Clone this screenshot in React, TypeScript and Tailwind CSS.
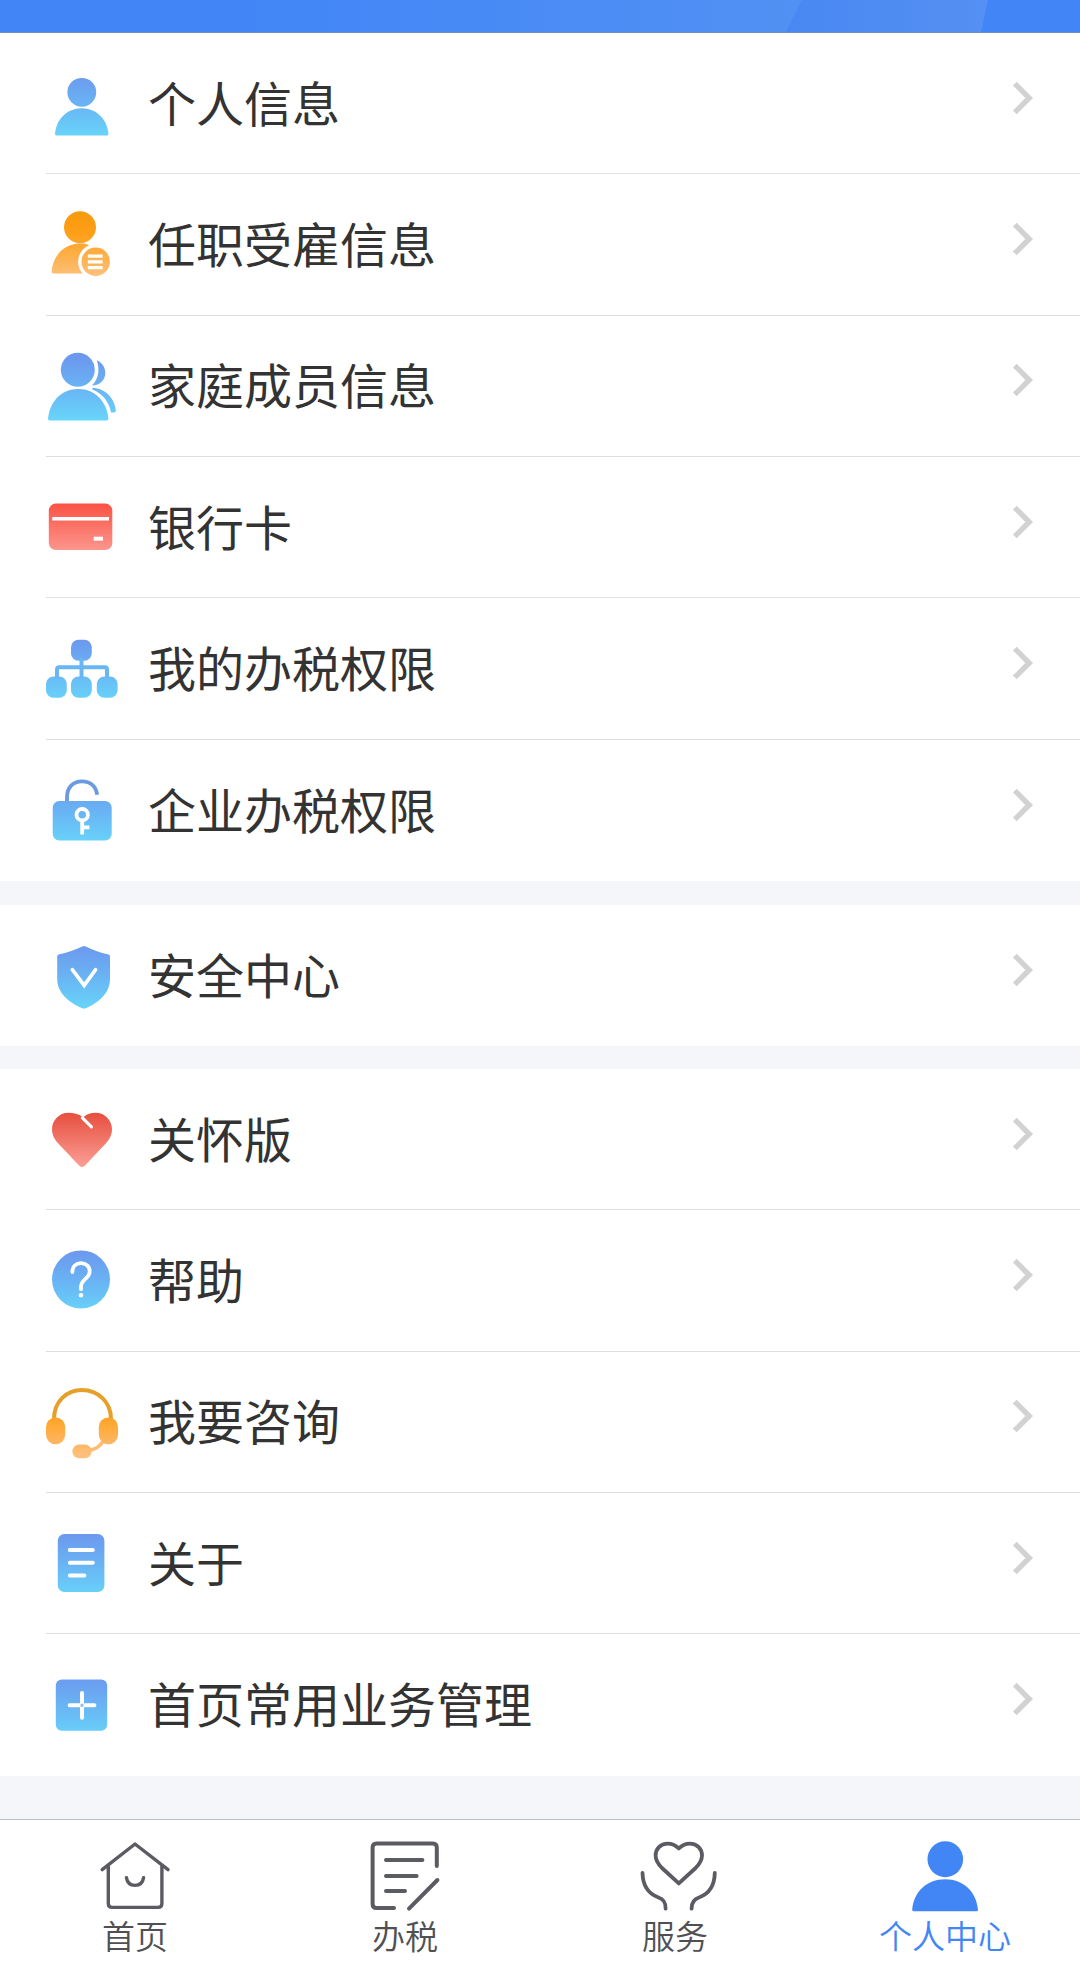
import type { ReactNode } from "react";

const BLUE = "url(#blue)";
const ORANGE = "url(#orange)";
const RED = "url(#red)";

function Gradients() {
  return (
    <svg className="absolute size-0" aria-hidden="true">
      <defs>
        <linearGradient id="blue" gradientUnits="userSpaceOnUse" x1="0" y1="41" x2="0" y2="103">
          <stop offset="0" stopColor="#6c98ee" />
          <stop offset="0.5" stopColor="#69b4f4" />
          <stop offset="1" stopColor="#68d4fa" />
        </linearGradient>
        <linearGradient id="orange" gradientUnits="userSpaceOnUse" x1="0" y1="37" x2="0" y2="103">
          <stop offset="0" stopColor="#f79a0c" />
          <stop offset="0.35" stopColor="#fe9f18" />
          <stop offset="1" stopColor="#fdc07c" />
        </linearGradient>
        <linearGradient id="red" gradientUnits="userSpaceOnUse" x1="0" y1="46" x2="0" y2="96">
          <stop offset="0" stopColor="#fb5143" />
          <stop offset="1" stopColor="#fc9a91" />
        </linearGradient>
        <linearGradient id="heart" gradientUnits="userSpaceOnUse" x1="0" y1="46" x2="0" y2="98">
          <stop offset="0" stopColor="#e75142" />
          <stop offset="1" stopColor="#fb9f96" />
        </linearGradient>
      </defs>
    </svg>
  );
}

const icons: Record<string, ReactNode> = {
  person: (
    <g fill={BLUE}>
      <circle cx="81.8" cy="59.3" r="14.4" />
      <path d="M56.6 102.6Q55 102.6 55 101C56 86.5 67 75.3 81.7 75.3S107.4 86.5 108.4 101Q108.4 102.6 106.8 102.6Z" />
    </g>
  ),
  job: (
    <>
      <g fill={ORANGE}>
        <circle cx="80" cy="53.3" r="16" />
        <path d="M53.2 99.4Q51.6 99.4 51.7 97.8C52.5 82 64 69.6 80 69.6C83 69.6 86 70 88.5 71L96 99.4Z" />
      </g>
      <circle cx="95.7" cy="87.7" r="17.6" fill="#fff" />
      <circle cx="95.7" cy="87.7" r="14.2" fill={ORANGE} />
      <path d="M87.8 82.2H102.6M87.8 87.9H102.6M87.8 93.7H102.6" stroke="#fff" strokeWidth="3.2" />
    </>
  ),
  family: (
    <g fill={BLUE}>
      <circle cx="77.8" cy="53.7" r="17" />
      <path d="M49.6 104.4Q48 104.4 48 102.8C49.5 86 61 73 78.2 73S107 86 108.4 102.8Q108.4 104.4 106.8 104.4Z" />
      <path d="M96.8 44.2C102.5 46.5 105.3 51.8 105.3 57C105.3 64 99.8 69.6 92 69.4C99 62.5 99.8 53 96.8 44.2Z" />
      <path d="M92.4 71.8C106 72.5 114.8 83 115.9 94.6Q116 96.4 114.2 96.4H111C109.3 86.5 103 77.6 92.4 73.4Z" />
    </g>
  ),
  card: (
    <>
      <rect x="48.8" y="46.6" width="63.5" height="46.5" rx="7" fill={RED} />
      <path d="M52.3 61.7H109" stroke="#fff" strokeWidth="3.6" />
      <path d="M93.7 81.7H103" stroke="#fff" strokeWidth="4" />
    </>
  ),
  tree: (
    <>
      <g fill={BLUE}>
        <rect x="71" y="41.7" width="20.8" height="21" rx="7.5" />
        <rect x="46" y="78.6" width="20.8" height="21.2" rx="7.5" />
        <rect x="71" y="78.6" width="20.8" height="21.2" rx="7.5" />
        <rect x="96.8" y="78.6" width="20.8" height="21.2" rx="7.5" />
      </g>
      <path d="M81.5 60V80M57 80V71.5Q57 69.2 59.3 69.2H104.7Q107 69.2 107 71.5V80" fill="none" stroke="#6ab6f4" strokeWidth="4" />
    </>
  ),
  lock: (
    <>
      <path d="M67 62V57C67 47.5 73 41.3 82 41.3C90.5 41.3 96 46.5 97.2 54.8" fill="none" stroke="#6b9bdf" strokeWidth="3.8" />
      <rect x="52.7" y="61" width="59" height="39.4" rx="6.5" fill={BLUE} />
      <g fill="none" stroke="#fff" strokeWidth="3.8">
        <circle cx="82.2" cy="74.7" r="5.7" />
        <path d="M82.2 80V94.6M82.2 87.4H89.4" />
      </g>
    </>
  ),
  shield: (
    <>
      <path d="M82.3 41.5Q84 40.5 85.7 41.5C92 44.8 100 47.6 108.7 49.6Q110 50 110 51.5V74C110 88 99 97.5 85.6 103.3Q84 104 82.4 103.3C69 97.5 57.2 88 57.2 74V51.5Q57.2 50 58.5 49.6C67 47.6 76 44.8 82.3 41.5Z" fill={BLUE} />
      <path d="M72.3 64.6L84.2 80.4L95.6 64.6" fill="none" stroke="#fff" strokeWidth="3.6" strokeLinecap="round" />
    </>
  ),
  heart: (
    <>
      <path d="M83.4 48.2C78.5 44.8 73 43.7 68.5 43.7C59 43.7 52 51.5 52 60C52 66 54.5 70.5 58.5 74.8L79 96.4Q82 99.6 85 96.4L105.5 74.8C109.5 70.5 112 66 112 60C112 51.5 105 43.7 95.5 43.7C91 43.7 87 44.8 83.4 48.2Z" fill="url(#heart)" />
      <path d="M82.4 48.8L91.4 57.8" stroke="#fff" strokeWidth="3.2" strokeLinecap="round" />
    </>
  ),
  help: (
    <>
      <circle cx="81" cy="69.4" r="29" fill={BLUE} />
      <path d="M72.4 62C72.4 56.5 76 53.2 81 53.2C86 53.2 89.7 56.5 89.7 61.2C89.7 64.8 87.8 66.8 85.2 69.2C82.6 71.6 81 73.4 81 76.6V79.2" fill="none" stroke="#fff" strokeWidth="3.8" strokeLinecap="round" />
      <circle cx="81" cy="85.2" r="2.3" fill="#fff" />
    </>
  ),
  headset: (
    <>
      <path d="M54 67C54 50 66 37.9 82 37.9S111 50 111 67" fill="none" stroke="#e6a02a" strokeWidth="4" />
      <path d="M90 98.2C95 97.4 100 94 103 89.5" fill="none" stroke="#fdbd72" strokeWidth="3.6" />
      <rect x="46" y="65.6" width="19.2" height="26.6" rx="9.4" fill={ORANGE} />
      <rect x="98.8" y="65.6" width="19.2" height="26.6" rx="9.4" fill={ORANGE} />
      <rect x="72.4" y="92.6" width="19.2" height="13.6" rx="6.8" fill={ORANGE} />
    </>
  ),
  doc: (
    <>
      <rect x="57.8" y="41" width="46.6" height="58" rx="6.5" fill={BLUE} />
      <path d="M69.8 57H92.8M69.8 69.8H92.8M69.8 82.6H84.4" stroke="#fff" strokeWidth="4" strokeLinecap="round" />
    </>
  ),
  plus: (
    <>
      <rect x="55.8" y="45.6" width="51.4" height="51.2" rx="6" fill={BLUE} />
      <path d="M69.6 71.3H94.4M82 58.9V83.7" stroke="#fff" strokeWidth="4" strokeLinecap="round" />
      <rect x="80.5" y="69.8" width="3" height="3" fill="#8fc0f5" />
    </>
  ),
};

type Item = { icon: string; label: string };

const groups: Item[][] = [
  [
    { icon: "person", label: "个人信息" },
    { icon: "job", label: "任职受雇信息" },
    { icon: "family", label: "家庭成员信息" },
    { icon: "card", label: "银行卡" },
    { icon: "tree", label: "我的办税权限" },
    { icon: "lock", label: "企业办税权限" },
  ],
  [{ icon: "shield", label: "安全中心" }],
  [
    { icon: "heart", label: "关怀版" },
    { icon: "help", label: "帮助" },
    { icon: "headset", label: "我要咨询" },
    { icon: "doc", label: "关于" },
    { icon: "plus", label: "首页常用业务管理" },
  ],
];

function Row({ icon, label }: Item) {
  return (
    <li className="flex h-[141.33px] items-center border-b border-[#dfdfe0] pr-[46px] last:border-b-0">
      <svg className="h-[141px] w-[72px] shrink-0 self-start overflow-visible" viewBox="46 0 72 141">
        {icons[icon]}
      </svg>
      <span className="mb-[5px] ml-[30px] flex-1 text-[48px] leading-[70px] text-[#333333]">{label}</span>
      <svg className="mb-[11px] h-[34px] w-[22px] overflow-visible" viewBox="0 0 22 34">
        <path d="M2.8 2.6L17.2 17L2.8 31.4" fill="none" stroke="#d2d2d2" strokeWidth="5.4" />
      </svg>
    </li>
  );
}

type Tab = { label: string; active?: boolean; box: string; drawing: ReactNode };

const tabs: Tab[] = [
  {
    label: "首页",
    box: "95 1836 80 80",
    drawing: (
      <g strokeWidth="3.4">
        <path d="M102.2 1869.6L135 1844L168 1869.6" />
        <path d="M108.3 1866V1903.4Q108.3 1907.4 112.3 1907.4H157.9Q161.9 1907.4 161.9 1903.4V1866" />
        <path d="M126.4 1877.6C127.2 1883 130.5 1885.4 135 1885.4S142.8 1883 143.6 1877.6" />
      </g>
    ),
  },
  {
    label: "办税",
    box: "365 1836 80 80",
    drawing: (
      <g strokeWidth="4">
        <path d="M436.8 1866V1847.6Q436.8 1843.6 432.8 1843.6H376.6Q372.6 1843.6 372.6 1847.6V1904Q372.6 1908 376.6 1908H394" />
        <path d="M386 1860H422.4M386 1876H416.6M386 1891H405M437.4 1880L409 1908.6" />
      </g>
    ),
  },
  {
    label: "服务",
    box: "635 1836 80 80",
    drawing: (
      <g strokeWidth="3.8">
        <path d="M678.8 1848.4C675.5 1845.2 671.5 1843.6 667.6 1843.6C660.5 1843.6 655.6 1849 655.6 1855.4C655.6 1860.4 658 1863.8 662 1868L678.8 1883.4L695.6 1868C699.6 1863.8 702 1860.4 702 1855.4C702 1849 697.1 1843.6 690 1843.6C686.1 1843.6 682.1 1845.2 678.8 1848.4Z" />
        <path d="M642.5 1873C642.8 1885 648 1893.5 658 1897.2C663.5 1899 665.8 1902 665.6 1908.6" />
        <path d="M714.8 1873C714.5 1885 709.5 1893.5 699.5 1897.2C694 1899 691.4 1902 691.6 1908.6" />
      </g>
    ),
  },
  {
    label: "个人中心",
    active: true,
    box: "905 1836 80 80",
    drawing: (
      <g fill="#4285f4" stroke="none">
        <ellipse cx="945.3" cy="1859.2" rx="17.8" ry="18" />
        <path d="M913.6 1911.2Q912 1911.2 912.2 1909.4C914 1891.7 926.5 1879.2 945.1 1879.2S976.2 1891.7 978 1909.4Q978.2 1911.2 976.6 1911.2Z" />
      </g>
    ),
  },
];

export default function App() {
  return (
    <div className="flex h-[1972px] w-[1080px] flex-col bg-[#f4f6fa] font-['Noto_Sans_CJK_SC','Noto_Sans',sans-serif]">
      <Gradients />
      <header className="h-[33px] shrink-0 border-b border-[#6f8fb8] bg-[#4285f6]">
        <svg className="h-8 w-[1080px]" viewBox="0 0 1080 32">
          <defs>
            <linearGradient id="sheen" x1="0" x2="1">
              <stop offset="0" stopColor="#4285f6" />
              <stop offset="1" stopColor="#5191f4" />
            </linearGradient>
            <linearGradient id="sheen2" x1="0" x2="1">
              <stop offset="0" stopColor="#4888f2" />
              <stop offset="1" stopColor="#5590f3" />
            </linearGradient>
          </defs>
          <path d="M250 0H802L786 32H250Z" fill="url(#sheen)" />
          <path d="M802 0H988L981 32H786Z" fill="url(#sheen2)" />
        </svg>
      </header>
      <main className="flex flex-1 flex-col">
        <ul className="bg-white pl-[46px]">
          {groups[0].map((item) => (
            <Row key={item.label} {...item} />
          ))}
        </ul>
        <ul className="mt-6 bg-white pl-[46px]">
          {groups[1].map((item) => (
            <Row key={item.label} {...item} />
          ))}
        </ul>
        <ul className="mt-[22.7px] bg-white pl-[46px]">
          {groups[2].map((item) => (
            <Row key={item.label} {...item} />
          ))}
        </ul>
      </main>
      <nav className="grid h-[153px] shrink-0 grid-cols-4 border-t border-[#bcbdc0] bg-white">
        {tabs.map((tab) => (
          <div key={tab.label} className="flex flex-col items-center pt-4">
            <svg
              className="size-20 shrink-0 overflow-visible"
              viewBox={tab.box}
              fill="none"
              stroke="#5b5b63"
              strokeLinecap="round"
              strokeLinejoin="round"
            >
              {tab.drawing}
            </svg>
            <span
              className={
                tab.active
                  ? "-mt-px text-[33px] leading-10 font-[350] text-[#4285f4]"
                  : "-mt-px text-[33px] leading-10 font-[350] text-[#505054]"
              }
            >
              {tab.label}
            </span>
          </div>
        ))}
      </nav>
    </div>
  );
}
